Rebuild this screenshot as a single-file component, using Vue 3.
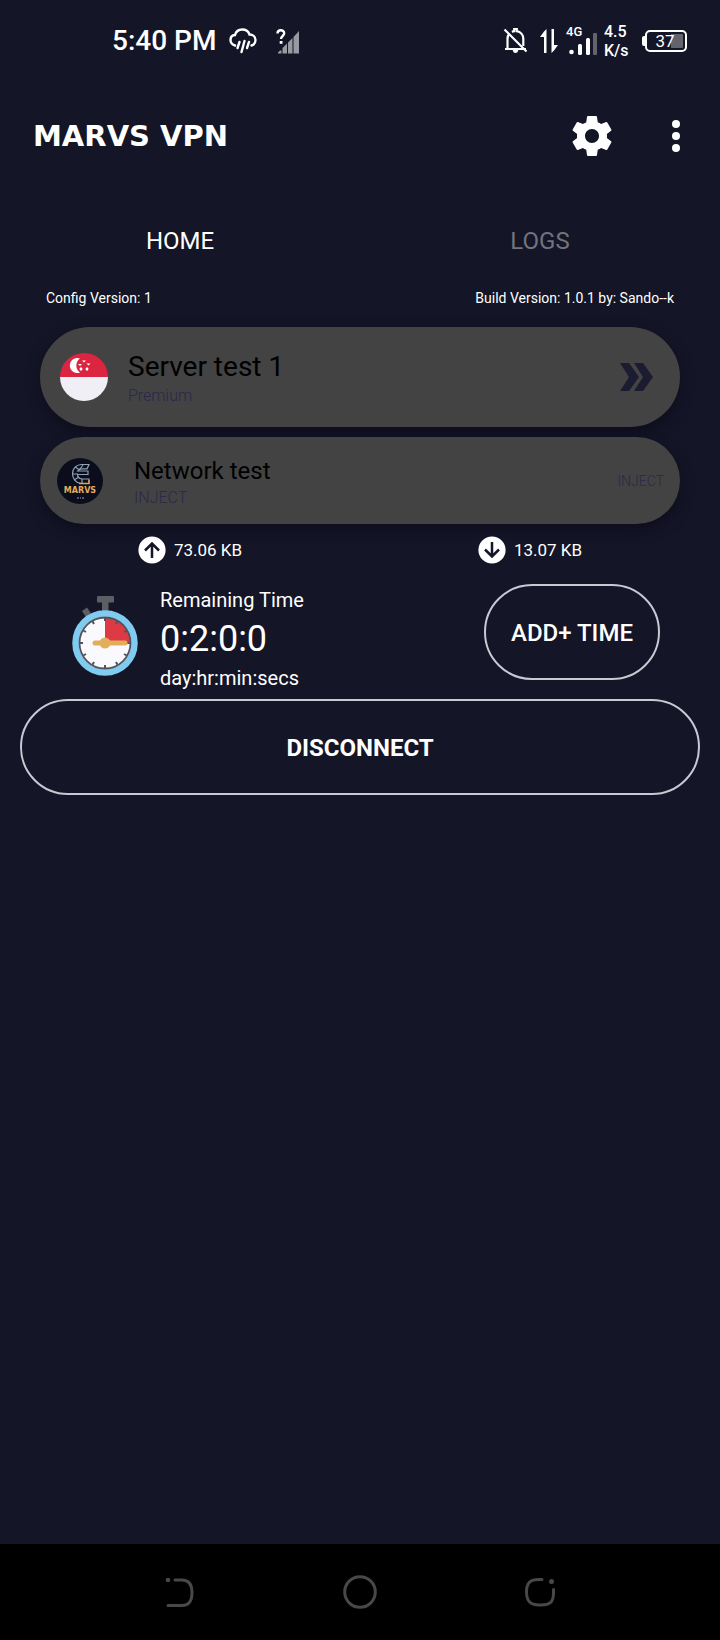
<script setup>
import { ref } from 'vue'

const activeTab = ref('HOME')
const tabs = ['HOME', 'LOGS']
const ticks = Array.from({ length: 12 }, (_, i) => i * 30)
</script>

<template>
  <div class="screen">
    <header class="status">
      <div class="status-left">
        <span class="clock">5:40 PM</span>
        <svg class="cloud" width="28" height="26" viewBox="0 0 28 26" fill="none" stroke="#fff" stroke-width="2.4" stroke-linecap="round">
          <path d="M6 17.500C3 16.500 1.500 14.500 1.500 12C1.500 9 3.500 7.200 6 7C7 3.500 9.800 1.500 13.200 1.500C17 1.500 19.500 3.500 20.500 6.500C24 6.500 26.500 8.800 26.500 12C26.500 14.800 24.800 16.800 22.500 17.500" />
          <path d="M10.500 14L8.500 20M15.500 13L12.500 24M20 14L18 20" />
        </svg>
        <svg width="24" height="25" viewBox="0 0 24 25" aria-label="Unknown signal">
          <path d="M2 24.500V23.500L4 21.500H5.500V24.500ZM6.500 24.500V19L11 14.500V24.500ZM12 24.500V13.500L16.500 9V24.500ZM17.500 24.500V8L23 2V24.500Z" fill="#9899a1" />
          <path d="M1.500 4.500C1.500 .2 8.200 .2 8.200 4.300C8.200 7 5 7 5 10" fill="none" stroke="#fff" stroke-width="2.400" />
          <rect x="3.700" y="12" width="2.800" height="2.800" fill="#fff" />
        </svg>
      </div>
      <div class="status-right">
        <svg class="bell" width="25" height="26" viewBox="0 0 25 26" fill="none" stroke="#fff" stroke-width="2.200">
          <path d="M2 21H23M4.500 20.500V11C4.500 8.800 5.200 7 6.500 5.600M9 4C9.800 3.500 10.500 3.300 11.200 3.200V1H13.800V3.200C17.500 3.800 20.300 6.800 20.300 11V18" />
          <path d="M1.500 1.500L23.500 23.500" />
          <path d="M9.700 22H15.300C15 24 14 25 12.500 25C11 25 10 24 9.700 22Z" fill="#fff" stroke="none" />
        </svg>
        <svg class="data" width="18" height="26" viewBox="0 0 18 26" fill="#fff">
          <path d="M6.500 1V25H4V9H0L4 3.500ZM11.500 1H14V17H18L14 22.500L11.500 25Z" />
        </svg>
        <div class="cell">
          <span class="net">4G</span>
          <svg width="28" height="22" viewBox="0 0 28 22">
            <circle cx="2.500" cy="19" r="2.300" fill="#fff" />
            <rect x="9" y="11" width="4" height="11" rx="1.500" fill="#fff" />
            <rect x="17" y="5" width="4" height="17" rx="1.500" fill="#fff" />
            <rect x="24" y="0" width="4" height="22" rx="1" fill="#62636d" />
          </svg>
        </div>
        <div class="speed"><span>4.5</span><span>K/s</span></div>
        <div class="battery"><span>37</span></div>
      </div>
    </header>

    <div class="appbar">
      <h1>MARVS VPN</h1>
      <div class="actions">
        <button type="button" aria-label="Settings">
          <svg width="40" height="40" viewBox="2 2 20 20" fill="#fff">
            <path d="M19.430 12.980c.040-.320.070-.640.070-.980s-.030-.660-.070-.980l2.110-1.650c.190-.150.240-.420.120-.640l-2-3.460c-.120-.220-.390-.300-.610-.220l-2.490 1c-.520-.400-1.080-.730-1.690-.980l-.380-2.650C14.460 2.180 14.250 2 14 2h-4c-.250 0-.460.180-.490.420l-.380 2.650c-.610.250-1.170.590-1.690.980l-2.490-1c-.230-.090-.490 0-.610.220l-2 3.460c-.130.220-.070.490.120.640l2.110 1.650c-.040.320-.070.650-.070.980s.030.660.070.980l-2.110 1.650c-.190.150-.240.420-.120.640l2 3.460c.120.220.390.300.610.220l2.490-1c.520.400 1.080.730 1.690.980l.380 2.650c.030.240.240.420.490.420h4c.250 0 .460-.180.490-.420l.380-2.650c.610-.250 1.170-.590 1.690-.980l2.490 1c.230.090.490 0 .610-.220l2-3.460c.120-.220.070-.490-.120-.640l-2.110-1.650zM12 15.500c-1.930 0-3.500-1.570-3.500-3.500s1.570-3.500 3.500-3.500 3.500 1.570 3.500 3.500-1.570 3.500-3.500 3.500z" />
          </svg>
        </button>
        <button type="button" aria-label="More options">
          <svg width="8" height="32" viewBox="0 0 8 32" fill="#fff">
            <circle cx="4" cy="4" r="4" /><circle cx="4" cy="16" r="4" /><circle cx="4" cy="28" r="4" />
          </svg>
        </button>
      </div>
    </div>

    <nav class="tabs">
      <button v-for="t in tabs" :key="t" type="button" :class="{ active: t === activeTab }" @click="activeTab = t">{{ t }}</button>
    </nav>

    <main>
      <div class="versions">
        <span>Config Version: 1</span>
        <span>Build Version: 1.0.1 by: Sando--k</span>
      </div>

      <button type="button" class="card server">
        <svg width="48" height="48" viewBox="0 0 48 48">
          <path d="M0 24A24 24 0 0 1 48 24Z" fill="#dc2540" />
          <path d="M0 24A24 24 0 0 0 48 24Z" fill="#efeff5" />
          <path d="M20 5.500A7.500 7.500 0 1 0 20 19.500A8.500 8.500 0 0 1 20 5.500Z" fill="#fff" />
          <g fill="#fff">
            <path d="M22 7.500h4l-2 2zM18 11h4l-2 2zM26.500 10.500h4l-2 2zM19.500 15.500l1.500-1.500 1.500 1.500-.5 2h-2zM25.500 15.500l1.500-1.500 1.500 1.500-.5 2h-2z" />
          </g>
        </svg>
        <span class="labels"><span class="title">Server test 1</span><span class="sub">Premium</span></span>
        <svg class="chevrons" width="33" height="28" viewBox="0 0 33 28" fill="#1b1b32">
          <path d="M0 0H9L19 14L9 28H0L9 14ZM14 0H23L33 14L23 28H14L23 14Z" />
        </svg>
      </button>

      <button type="button" class="card network">
        <svg width="46" height="46" viewBox="0 0 46 46">
          <circle cx="23" cy="23" r="23" fill="#0b0d1c" />
          <g fill="none" stroke="#8fa2b5" stroke-width="1.200">
            <path d="M32 6.500H24C19 7 15.500 10.500 15.500 15.500C15.500 21 19 25 24 25.500H32V21H25C22 20.500 20.500 19 20.500 16.500H31V13H20.500C21.500 11.500 23 10.800 25 10.800H30Z" />
            <path d="M18 9L23 12M15.500 16H21M17 22L22 19M26 7L23 11M25 25V21" />
          </g>
          <path d="M22 25.500H32V22" fill="none" stroke="#d9a557" stroke-width="1.300" />
          <text x="23" y="35" text-anchor="middle" class="mark">MARVS</text>
          <path d="M20 40H22M23 40H24M25 40H27" stroke="#9aa0b4" />
        </svg>
        <span class="labels"><span class="title">Network test</span><span class="sub">INJECT</span></span>
        <span class="mode">INJECT</span>
      </button>

      <div class="traffic">
        <div>
          <svg width="28" height="28" viewBox="0 0 28 28">
            <circle cx="14" cy="14" r="13.600" fill="#fff" />
            <path d="M14 22V7.500M7 14.500L14 7.500L21 14.500" fill="none" stroke="#141526" stroke-width="2.500" />
          </svg>
          <span>73.06 KB</span>
        </div>
        <div>
          <svg width="28" height="28" viewBox="0 0 28 28">
            <circle cx="14" cy="14" r="13.600" fill="#fff" />
            <path d="M14 6V20.500M7 13.500L14 20.500L21 13.500" fill="none" stroke="#141526" stroke-width="2.500" />
          </svg>
          <span>13.07 KB</span>
        </div>
      </div>

      <section class="timer">
        <svg class="watch" width="66" height="80" viewBox="0 0 66 80">
          <g fill="#5d5e65">
            <rect x="25" y="0" width="17" height="6.500" rx="1" />
            <rect x="30" y="5" width="6.500" height="11" />
            <path d="M10 15L15 11.500L19 17.500L14 21Z" />
          </g>
          <circle cx="33" cy="47" r="29.500" fill="#fafafe" stroke="#80cbf0" stroke-width="6.500" />
          <path d="M33 47V21A26 26 0 0 1 59 47Z" fill="#dd3a45" />
          <circle cx="33" cy="47" r="25.500" fill="none" stroke="#51545d" stroke-width="1.800" />
          <path v-for="a in ticks" :key="a" d="M33 22V25" stroke="#51545d" stroke-width="2" :transform="`rotate(${a} 33 47)`" />
          <path d="M23 47H53" stroke="#e2ae5a" stroke-width="5" stroke-linecap="round" />
          <circle cx="33" cy="47" r="5.500" fill="#e2ae5a" />
        </svg>
        <div class="remaining">
          <span>Remaining Time</span>
          <strong>0:2:0:0</strong>
          <span>day:hr:min:secs</span>
        </div>
        <button type="button" class="outline add">ADD+ TIME</button>
      </section>

      <button type="button" class="outline disconnect">DISCONNECT</button>
    </main>

    <footer>
      <button type="button" aria-label="Back">
        <svg width="32" height="32" viewBox="0 0 32 32" fill="none" stroke="#484848" stroke-width="3" stroke-linecap="round">
          <circle cx="4" cy="4" r="2.300" fill="#484848" stroke="none" />
          <path d="M11 4H18C25 4 28 8 28 16.500S25 29.500 18 29.500H4" />
        </svg>
      </button>
      <button type="button" aria-label="Home">
        <svg width="34" height="34" viewBox="0 0 34 34" fill="none" stroke="#484848" stroke-width="3">
          <circle cx="17" cy="17" r="15.300" />
        </svg>
      </button>
      <button type="button" aria-label="Recent apps">
        <svg width="32" height="32" viewBox="0 0 32 32" fill="none" stroke="#484848" stroke-width="3" stroke-linecap="round">
          <circle cx="27.500" cy="5.500" r="2.500" fill="#484848" stroke="none" />
          <path d="M18 3.500H15C6 3.500 2.500 7 2.500 16S6 29 15 29H17C26 29 29.500 26 29.500 17V13.500" />
        </svg>
      </button>
    </footer>
  </div>
</template>

<style>
body { background: #141526; }
</style>

<style scoped>
* { box-sizing: border-box; }
.screen {
  min-height: 100vh;
  display: flex;
  flex-direction: column;
  background: #141526;
  color: #fff;
  font-family: Roboto, "Liberation Sans", sans-serif;
}
svg { display: block; flex: none; }
button {
  border: 0;
  padding: 0;
  background: none;
  color: inherit;
  font: inherit;
  cursor: pointer;
}
.status {
  height: 80px;
  padding: 2px 33px 0 112px;
  display: flex;
  align-items: center;
  justify-content: space-between;
}
.status-left, .status-right { display: flex; align-items: center; }
.clock { font-size: 28px; line-height: 32px; font-weight: 500; margin-right: 13px; }
.cloud { margin-right: 19px; }
.bell { margin-right: 12px; }
.data { margin-right: 8px; }
.cell { display: flex; flex-direction: column; width: 38px; height: 28px; position: relative; justify-content: flex-end; }
.cell svg { margin-left: 3px; }
.net { position: absolute; left: 0; top: -2px; font-size: 13px; line-height: 13px; font-weight: 500; }
.speed { display: flex; flex-direction: column; font-size: 16px; line-height: 19px; font-weight: 500; width: 28px; margin-right: 10px; }
.battery {
  position: relative;
  width: 42px;
  height: 22px;
  margin-left: 3px;
  border: 2px solid #fff;
  border-radius: 5px;
  font-size: 17px;
  line-height: 18px;
  text-align: center;
  background: linear-gradient(90deg, transparent 65%, #62636d 65%) content-box;
  padding: 2px;
}
.battery span { display: block; width: 32px; line-height: 15px; }
.battery::before {
  content: "";
  position: absolute;
  left: -5px;
  top: 4px;
  width: 3px;
  height: 10px;
  border-radius: 2px 0 0 2px;
  background: #fff;
}
.appbar {
  height: 112px;
  padding: 0 40px 0 33px;
  display: flex;
  align-items: center;
  justify-content: space-between;
}
h1 {
  margin: 0;
  font-family: "DejaVu Sans", sans-serif;
  font-size: 29px;
  line-height: 36px;
  font-weight: 700;
}
.actions { display: flex; align-items: center; gap: 60px; }
.tabs { height: 96px; display: grid; grid-template-columns: 1fr 1fr; }
.tabs button { padding-top: 2px; font-size: 24px; color: #72737c; }
.tabs .active { color: #fff; }
main { flex: 1; padding: 0 20px; }
.versions {
  display: flex;
  justify-content: space-between;
  padding: 2px 26px 21px;
  font-size: 14px;
  line-height: 16px;
}
.card {
  display: flex;
  align-items: center;
  width: calc(100% - 40px);
  margin: 0 20px 10px;
  border-radius: 50px;
  background: #434343;
  color: #000;
  text-align: left;
  box-shadow: 0 5px 14px #0d0d1d;
}
.server { height: 100px; padding: 0 27px 0 20px; }
.network { height: 87px; padding: 0 16px 0 17px; }
.labels { display: flex; flex-direction: column; flex: 1; padding-top: 4px; }
.server .labels { padding-left: 20px; }
.network .labels { padding-left: 31px; }
.title { font-size: 24px; line-height: 30px; }
.server .title { font-size: 28px; line-height: 34px; }
.sub { font-size: 16px; line-height: 24px; font-weight: 300; color: #29294a; }
.mode { font-size: 14px; font-weight: 300; color: #29294a; }
.mark { font: 700 8px "DejaVu Sans", sans-serif; fill: #e2ae5a; }
.traffic { display: grid; grid-template-columns: 1fr 1fr; padding-top: 2px; font-size: 17px; }
.traffic div { display: flex; align-items: center; justify-content: center; gap: 8px; }
.timer { display: flex; align-items: flex-start; padding: 20px 40px 0 52px; height: 116px; }
.watch { margin-top: 12px; }
.remaining { display: flex; flex-direction: column; flex: 1; margin-top: 4px; padding-left: 22px; font-size: 20px; line-height: 24px; }
.remaining strong { font-size: 36px; line-height: 54px; font-weight: 400; }
.outline { height: 96px; padding-top: 2px; border: 2px solid #c9c9d3; border-radius: 48px; font-size: 24px; }
.add { width: 176px; font-weight: 500; }
.disconnect { width: 100%; margin-top: 19px; font-weight: 700; }
footer {
  height: 96px;
  padding: 0 90px;
  display: grid;
  grid-template-columns: repeat(3, 1fr);
  justify-items: center;
  align-items: center;
  background: #000;
}
</style>
